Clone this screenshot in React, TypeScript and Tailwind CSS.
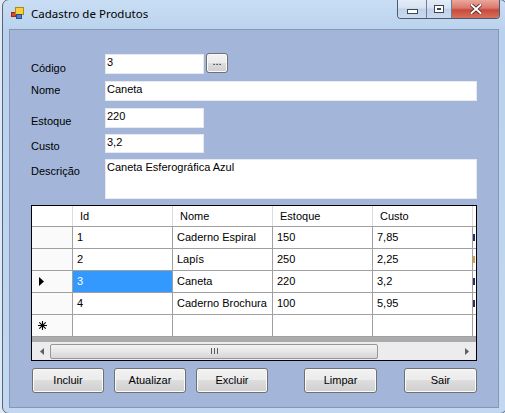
import React from 'react';

const btnCls =
  'flex items-center justify-center rounded-[3px] border border-[#707070] bg-[linear-gradient(#f2f2f2_0%,#ebebeb_50%,#dddddd_50%,#cfcfcf_100%)] shadow-[inset_0_0_0_1px_#fbfbfb] text-[11px] text-black leading-none';

const rows = [
  { id: '1', nome: 'Caderno Espiral', estoque: '150', custo: '7,85' },
  { id: '2', nome: 'Lapís', estoque: '250', custo: '2,25' },
  { id: '3', nome: 'Caneta', estoque: '220', custo: '3,2' },
  { id: '4', nome: 'Caderno Brochura', estoque: '100', custo: '5,95' },
];

const TextBox = ({ value, className }: { value: string; className: string }) => (
  <div className={`bg-white border border-[#e6eaf0] pl-[1px] pt-[1px] text-[11px] leading-[13px] text-black ${className}`}>
    {value}
  </div>
);

const Label = ({ text, pt }: { text: string; pt: string }) => (
  <div className={`w-[74px] shrink-0 text-[11px] leading-[13px] text-black ${pt}`}>{text}</div>
);

const Asterisk = () => (
  <svg width="9" height="9" viewBox="0 0 9 9" className="block">
    <path d="M4.5 0v9M0 4.5h9M1.3 1.3l6.4 6.4M7.7 1.3l-6.4 6.4" stroke="#000" strokeWidth="1.1" />
  </svg>
);

export default function App() {
  return (
    <div className="w-[505px] h-[413px] overflow-hidden bg-[#dfe8f3] font-['Liberation_Sans',Arial,sans-serif]">
      {/* window */}
      <div className="-mt-px ml-[2px] w-[505px] h-[415px] rounded-[7px] border border-[#55657c] bg-[linear-gradient(180deg,#c9def4_0%,#b9d1ec_8%,#bdd4ee_50%,#c3d8f0_100%)] px-[6px] flex flex-col">
        {/* title bar */}
        <div className="h-[29px] flex items-start shrink-0">
          <svg width="14" height="14" viewBox="0 0 14 14" className="mt-[7px] ml-[2px]">
            <rect x="0.5" y="5.5" width="4" height="4" fill="#e0442c" stroke="#9a2a1a" />
            <rect x="4.5" y="0.5" width="8" height="7" fill="#f6cf3a" stroke="#b08a10" />
            <rect x="5.5" y="7.5" width="5" height="4" fill="#4a7fd0" stroke="#2a4f90" />
          </svg>
          <span className="ml-[6px] mt-[6px] text-[11.5px] leading-[15px] text-black font-['Noto_Sans',sans-serif]">
            Cadastro de Produtos
          </span>
          {/* caption buttons */}
          <div className="ml-auto flex h-[19px] rounded-b-[4px] border border-t-0 border-[#4d5b70] overflow-hidden">
            <div className="w-[29px] flex items-center justify-center bg-[linear-gradient(#e4edf8_0%,#d5e2f2_45%,#c0d2ea_50%,#cadaee_100%)] border-r border-[#6e7e96]">
              <div className="mt-[5px] w-[11px] h-[5px] border border-[#3c4656] bg-white" />
            </div>
            <div className="w-[25px] flex items-center justify-center bg-[linear-gradient(#e4edf8_0%,#d5e2f2_45%,#c0d2ea_50%,#cadaee_100%)] border-r border-[#6e7e96]">
              <div className="w-[10px] h-[8px] border border-[#3c4656] bg-white flex items-center justify-center">
                <div className="w-[4px] h-[2px] border border-[#3c4656]" />
              </div>
            </div>
            <div className="w-[47px] flex items-center justify-center bg-[linear-gradient(#eaa89c_0%,#d9786a_45%,#c84a3a_55%,#d8705c_100%)]">
              <svg width="12" height="10" viewBox="0 0 12 10">
                <path d="M1.5 1l9 8M10.5 1l-9 8" stroke="#4a2320" strokeWidth="3.6" strokeLinecap="square" />
                <path d="M1.5 1l9 8M10.5 1l-9 8" stroke="#fff" strokeWidth="2" strokeLinecap="square" />
              </svg>
            </div>
          </div>
        </div>

        {/* client area */}
        <div className="w-[490px] h-[379px] shrink-0 border border-[#8497b5] bg-[#a3b6d9] pl-[21px] pt-[24px]">
          <div className="flex h-[20px]">
            <Label text="Código" pt="pt-[8px]" />
            <TextBox value="3" className="w-[99px] h-[20px]" />
            <div className={`${btnCls} ml-[2px] -mt-px w-[22px] h-[20px] items-end pb-[5px]`}>...</div>
          </div>
          <div className="flex h-[20px] mt-[7px]">
            <Label text="Nome" pt="pt-[3px]" />
            <TextBox value="Caneta" className="w-[372px] h-[20px]" />
          </div>
          <div className="flex h-[20px] mt-[7px]">
            <Label text="Estoque" pt="pt-[7px]" />
            <TextBox value="220" className="w-[99px] h-[20px]" />
          </div>
          <div className="flex h-[19px] mt-[6px]">
            <Label text="Custo" pt="pt-[6px]" />
            <TextBox value="3,2" className="w-[99px] h-[19px]" />
          </div>
          <div className="flex h-[40px] mt-[6px]">
            <Label text="Descrição" pt="pt-[6px]" />
            <TextBox value="Caneta Esferográfica Azul" className="w-[372px] h-[40px]" />
          </div>

          {/* data grid */}
          <div className="mt-[6px] w-[446px] h-[156px] border border-black bg-[#ababab] overflow-hidden flex flex-col text-[11px] leading-[13px] text-black">
            <div className="flex h-[21px] shrink-0 bg-white border-b border-[#a0a0a0]">
              <div className="w-[41px] shrink-0 border-r border-[#dcdcdc]" />
              {['Id', 'Nome', 'Estoque', 'Custo'].map((h) => (
                <div key={h} className="w-[100px] shrink-0 border-r border-[#dcdcdc] pl-[7px] flex items-center">
                  {h}
                </div>
              ))}
              <div className="w-[3px] shrink-0" />
            </div>
            {rows.map((r, i) => (
              <div key={r.id} className="flex h-[22px] shrink-0 bg-white border-b border-[#a0a0a0]">
                <div className="w-[41px] shrink-0 border-r border-[#a0a0a0] bg-[#fafafa] pl-[7px] flex items-center">
                  {i === 2 && (
                    <svg width="5" height="9" viewBox="0 0 5 9">
                      <path d="M0 0l5 4.5L0 9z" fill="#000" />
                    </svg>
                  )}
                </div>
                <div
                  className={`w-[100px] shrink-0 border-r border-[#a0a0a0] pl-[4px] flex items-center ${
                    i === 2 ? 'bg-[#3399ff] text-white' : ''
                  }`}
                >
                  {r.id}
                </div>
                <div className="w-[100px] shrink-0 border-r border-[#a0a0a0] pl-[4px] flex items-center">{r.nome}</div>
                <div className="w-[100px] shrink-0 border-r border-[#a0a0a0] pl-[4px] flex items-center">{r.estoque}</div>
                <div className="w-[100px] shrink-0 border-r border-[#a0a0a0] pl-[4px] flex items-center">{r.custo}</div>
                <div className="w-[3px] shrink-0 flex items-center">
                  <div className={`w-[2px] h-[7px] ${i === 1 ? 'bg-[#d9a040]' : 'bg-[#28306a]'}`} />
                </div>
              </div>
            ))}
            <div className="flex h-[22px] shrink-0 bg-white border-b border-[#a0a0a0]">
              <div className="w-[41px] shrink-0 border-r border-[#a0a0a0] bg-[#fafafa] pl-[6px] flex items-center">
                <Asterisk />
              </div>
              {[0, 1, 2, 3].map((k) => (
                <div key={k} className="w-[100px] shrink-0 border-r border-[#a0a0a0]" />
              ))}
              <div className="w-[3px] shrink-0" />
            </div>
            <div className="h-[5px] shrink-0" />
            {/* horizontal scrollbar */}
            <div className="h-[18px] shrink-0 bg-[#ececee] flex items-center">
              <div className="w-[18px] shrink-0 flex items-center justify-center pl-[2px]">
                <svg width="4" height="7" viewBox="0 0 4 7">
                  <path d="M4 0L0 3.5L4 7z" fill="#606060" />
                </svg>
              </div>
              <div className="w-[328px] h-[15px] shrink-0 rounded-[2px] border border-[#979797] bg-[linear-gradient(#f3f3f3_0%,#e6e6e6_50%,#d6d6d6_100%)] flex items-center justify-center gap-[2px]">
                <div className="w-px h-[6px] bg-[#5a5a5a]" />
                <div className="w-px h-[6px] bg-[#5a5a5a]" />
                <div className="w-px h-[6px] bg-[#5a5a5a]" />
              </div>
              <div className="flex-1" />
              <div className="w-[18px] shrink-0 flex items-center justify-center pr-[1px]">
                <svg width="4" height="7" viewBox="0 0 4 7">
                  <path d="M0 0L4 3.5L0 7z" fill="#606060" />
                </svg>
              </div>
            </div>
          </div>

          {/* buttons */}
          <div className="mt-[7px] flex">
            <button className={`${btnCls} ml-px w-[72px] h-[25px]`}>Incluir</button>
            <button className={`${btnCls} ml-[10px] w-[72px] h-[25px]`}>Atualizar</button>
            <button className={`${btnCls} ml-[10px] w-[72px] h-[25px]`}>Excluir</button>
            <button className={`${btnCls} ml-[36px] w-[73px] h-[25px]`}>Limpar</button>
            <button className={`${btnCls} ml-[27px] w-[73px] h-[25px]`}>Sair</button>
          </div>
        </div>
      </div>
    </div>
  );
}
